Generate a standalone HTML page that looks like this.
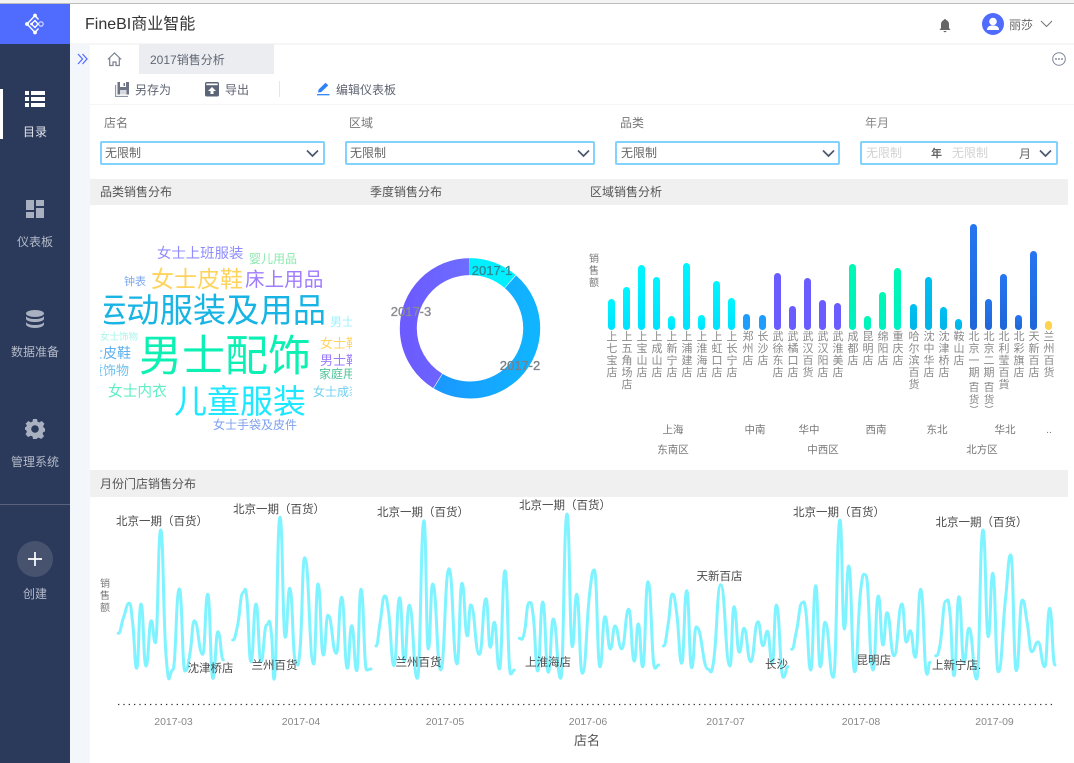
<!DOCTYPE html>
<html lang="zh"><head><meta charset="utf-8"><title>FineBI</title>
<style>
html,body{margin:0;padding:0;width:1074px;height:763px;overflow:hidden;background:#fff;font-family:"Liberation Sans","Noto Sans CJK SC",sans-serif}
body{position:relative;filter:blur(.35px)}
div,svg{position:absolute}
.t{position:absolute;white-space:nowrap;line-height:0;font-size:12px;color:#666}
.c{transform:translateX(-50%)}
.sb{color:#b4bac8;left:0;width:70px;text-align:center;font-size:12px}
.sel{border:2px solid #82d2ff;border-radius:2px;box-sizing:border-box;top:141px;height:24px;background:#fff}
.band{background:#f0f0f0;left:90px;width:978px}
.b{width:7px;border-radius:4px;bottom:433px}
.v{width:16px;top:332px;text-align:center;font-size:11px;line-height:11.95px;color:#888}
.r{font-size:10.5px;color:#777}
.w{position:absolute;white-space:nowrap;line-height:0}
.m{font-size:10.5px;color:#888}
.l{font-size:11.5px;color:#4a4a4a}
</style></head><body>
<div style="left:0;top:0;width:1074px;height:3px;background:#f4f4f4"></div>
<div style="left:0;top:3px;width:1074px;height:1px;background:#bdbdbd"></div>
<div style="left:0;top:44px;width:70px;height:719px;background:#2b3a5b"></div>
<div style="left:0;top:4px;width:70px;height:40px;background:#4f6cff"></div>
<div style="left:70px;top:44px;width:20px;height:719px;background:#f3f7fb"></div>
<div style="left:70px;top:43px;width:1004px;height:2px;background:#f6f6f6"></div>
<svg style="left:24px;top:12px" width="22" height="24" viewBox="0 0 22 24" fill="none" stroke="#fff"><path d="M3 12 11 3.500l3.500 4M3 12l8 8.500 3.500-4M7.500 12 11 8.500l3 3.500-3 3.500z" stroke-width="1.400"/><g fill="#fff" stroke="none"><circle cx="11" cy="3.500" r="1.900"/><circle cx="3" cy="12" r="1.900"/><circle cx="11" cy="20.500" r="1.900"/><circle cx="7.500" cy="12" r="1.300"/></g><circle cx="17" cy="12" r="2.200" stroke-width="1.100" opacity=".8"/></svg>
<div class="t" style="left:85px;top:24.500px;font-size:16px;color:#333">FineBI商业智能</div>
<svg style="left:938px;top:18px" width="14" height="15" viewBox="0 0 14 15"><path d="M7 1c.8 0 1 .5 1 1 2 .6 3 2.200 3 4.500V10l1.500 2h-11L3 10V6.500C3 4.200 4 2.600 6 2c0-.5.200-1 1-1zM5.500 13h3c0 .7-.6 1.200-1.500 1.200S5.500 13.700 5.500 13z" fill="#666"/></svg>
<svg style="left:982px;top:13px" width="22" height="22" viewBox="0 0 22 22"><circle cx="11" cy="11" r="11" fill="#4f6cff"/><circle cx="11" cy="8.500" r="3.800" fill="#fff"/><path d="M5 17c0-3.500 2.500-4.500 6-4.500s6 1 6 4.500z" fill="#fff"/></svg>
<div class="t" style="left:1009px;top:25px;color:#666">丽莎</div>
<svg style="left:1040px;top:20px" width="13" height="8" viewBox="0 0 13 8" fill="none"><path d="M1 1l5.500 5.500L12 1" stroke="#777" stroke-width="1.100"/></svg>
<svg style="left:77px;top:53px" width="11" height="12" viewBox="0 0 11 12" fill="none" stroke="#5a6cff" stroke-width="1.300"><path d="M1 1l4.500 5L1 11M5.500 1l4.500 5-4.500 5"/></svg>
<svg style="left:107px;top:52px" width="15" height="15" viewBox="0 0 15 15" fill="none" stroke="#7b8191" stroke-width="1.200"><path d="M.8 7.500 7.500 1l6.700 6.500M2.700 6v7.500h3.300v-3.500h3v3.500h3.300V6"/></svg>
<div style="left:139px;top:44px;width:135px;height:30px;background:#ecedf0"></div>
<div class="t" style="left:150px;top:60px;color:#5f6675">2017销售分析</div>
<svg style="left:1052px;top:52px" width="14" height="14" viewBox="0 0 14 14"><circle cx="7" cy="7" r="6.300" fill="none" stroke="#7d8599" stroke-width="1"/><g fill="#6a7287"><circle cx="4" cy="7" r=".9"/><circle cx="7" cy="7" r=".9"/><circle cx="10" cy="7" r=".9"/></g></svg>
<svg style="left:115px;top:82px" width="15" height="15" viewBox="0 0 15 15"><path d="M2.500 0H14v12.500H2.500z" fill="#6d7384"/><path d="M5 0h6v5H5z" fill="#fff"/><path d="M8.500 1h1.500v3H8.500z" fill="#6d7384"/><path d="M5 8h6.500v4.500H5z" fill="#d5d8de"/><path d="M.6 3v11.400H13" fill="none" stroke="#8d93a1" stroke-width="1.100"/></svg>
<div class="t" style="left:135px;top:90px;color:#5d6372">另存为</div>
<svg style="left:205px;top:82px" width="14" height="15" viewBox="0 0 14 15"><path d="M0 1.500C0 .7.700 0 1.500 0h11c.8 0 1.500.7 1.500 1.500V13c0 .8-.7 1.500-1.500 1.500h-11C.7 14.500 0 13.800 0 13z" fill="#5c6478"/><path d="M1.300 1.500h11.400v1.700H1.300z" fill="#fff"/><path d="M7 5l4 4H8.500v3h-3V9H3z" fill="#fff"/></svg>
<div class="t" style="left:225px;top:90px;color:#5d6372">导出</div>
<div style="left:279px;top:81px;width:1px;height:16px;background:#e6e6e6"></div>
<svg style="left:317px;top:82px" width="13" height="14" viewBox="0 0 13 14"><path d="M1 10.500l.6-3L8.500.8l2.800 2.600L4.300 10z" fill="#2d83f5"/><path d="M0 12.700h12.500" stroke="#2d83f5" stroke-width="1.300"/></svg>
<div class="t" style="left:336px;top:90px;color:#5d6372">编辑仪表板</div>
<div style="left:90px;top:104px;width:984px;height:1px;background:#f5f5f5"></div>
<div class="t" style="left:104px;top:122.500px;color:#777">店名</div>
<div class="t" style="left:349px;top:122.500px;color:#777">区域</div>
<div class="t" style="left:620px;top:122.500px;color:#777">品类</div>
<div class="t" style="left:865px;top:122.500px;color:#888">年月</div>
<div class="sel" style="left:100px;width:225px"></div><div class="t" style="left:105px;top:153px;color:#666">无限制</div>
<div class="sel" style="left:345px;width:250px"></div><div class="t" style="left:350px;top:153px;color:#666">无限制</div>
<div class="sel" style="left:615px;width:225px"></div><div class="t" style="left:621px;top:153px;color:#666">无限制</div>
<div class="sel" style="left:860px;width:198px"></div>
<div class="t" style="left:866px;top:153px;color:#d2d2d2">无限制</div><div class="t" style="left:931px;top:153.500px;color:#666;font-weight:bold;font-size:11px">年</div>
<div class="t" style="left:952px;top:153px;color:#d2d2d2">无限制</div><div class="t" style="left:1019px;top:153.500px;color:#666;font-size:12px">月</div>
<svg style="left:0;top:0" width="1074" height="170" fill="none" stroke="#4c5870" stroke-width="1.700"><path d="M307 150.500l5.500 5.500 5.500-5.500M578 150.500l5.500 5.500 5.500-5.500M823 150.500l5.500 5.500 5.500-5.500M1040 150.500l5.500 5.500 5.500-5.500"/></svg>
<div class="band" style="top:179px;height:26px"></div>
<div class="t" style="left:100px;top:192px;color:#555">品类销售分布</div>
<div class="t" style="left:370px;top:192px;color:#555">季度销售分布</div>
<div class="t" style="left:590px;top:192px;color:#555">区域销售分析</div>
<div class="band" style="top:470px;height:27px"></div>
<div class="t" style="left:100px;top:484px;color:#555">月份门店销售分布</div>

<div style="left:0;top:89px;width:3px;height:50px;background:#fff"></div>
<svg style="left:25px;top:91px" width="20" height="16" viewBox="0 0 20 16" fill="#fff"><path d="M0 0h4v4H0zM6 0h14v4H6zM0 6h4v4H0zM6 6h14v4H6zM0 12h4v4H0zM6 12h14v4H6z"/></svg>
<div class="t sb" style="top:132px;color:#e6e8ee">目录</div>
<svg style="left:26px;top:200px" width="18" height="18" viewBox="0 0 18 18" fill="#a9b0c0"><path d="M0 0h8v10H0zM10 0h8v6h-8zM0 12h8v6H0zM10 8h8v10h-8z"/></svg>
<div class="t sb" style="top:242px">仪表板</div>
<svg style="left:26px;top:310px" width="18" height="18" viewBox="0 0 18 18" fill="#a9b0c0"><ellipse cx="9" cy="3.500" rx="9" ry="3.500"/><path d="M0 6c1 2 4.500 3 9 3s8-1 9-3v3c-1 2-4.500 3-9 3S1 11 0 9zM0 12c1 2 4.500 3 9 3s8-1 9-3v2.500c-.5 2-4.500 3.500-9 3.500s-8.500-1.500-9-3.500z"/></svg>
<div class="t sb" style="top:352px">数据准备</div>
<svg style="left:25px;top:419px" width="20" height="20" viewBox="0 0 20 20"><path d="M8 0h4l.5 2.600 1.900.8L16.700 2l2.800 2.800-1.400 2.300.8 1.900L21 9.500v3l-2.600.4-.8 1.900 1.400 2.400-2.800 2.800-2.400-1.400-1.900.7L12 20H8l-.5-2.600-1.900-.7-2.400 1.400L.5 15.300l1.400-2.400-.8-1.900L-1 10.500v-2l2.100-.5.800-1.900L.5 4.800 3.300 2l2.300 1.400 1.900-.8z" fill="#a9b0c0"/><circle cx="10" cy="10" r="3.800" fill="#2b3a5b"/></svg>
<div class="t sb" style="top:462px">管理系统</div>
<div style="left:0;top:504px;width:70px;height:1px;background:#59637b"></div>
<div style="left:17px;top:541px;width:36px;height:36px;border-radius:50%;background:#47526e"></div>
<svg style="left:28px;top:552px" width="14" height="14" viewBox="0 0 14 14"><path d="M7 0v14M0 7h14" stroke="#fff" stroke-width="1.700"/></svg>
<div class="t sb" style="top:594px">创建</div>

<!-- word cloud -->
<div style="left:100px;top:230px;width:252px;height:210px;overflow:hidden;font-family:'Liberation Sans','Noto Sans CJK SC',sans-serif">
<div class="w" style="left:57px;top:24px;font-size:14.400px;color:#8f8cff">女士上班服装</div>
<div class="w" style="left:149px;top:29px;font-size:12px;color:#8ee8b0">婴儿用品</div>
<div class="w" style="left:24px;top:52px;font-size:11px;color:#7aa8ee">钟表</div>
<div class="w" style="left:51px;top:49px;font-size:23px;color:#ffd45e">女士皮鞋</div>
<div class="w" style="left:145px;top:50px;font-size:19.600px;color:#a07cff">床上用品</div>
<div class="w" style="left:-7px;top:82px;font-size:33.300px;color:#18b4e4;clip-path:inset(-30px 0 -30px 11px)">运动服装及用品</div>
<div class="w" style="left:230px;top:92px;font-size:12px;color:#9ff0ff">男士</div>
<div class="w" style="left:0;top:108px;font-size:9.500px;color:#a8f5ea">女士饰物</div>
<div class="w" style="left:39px;top:127px;font-size:43px;color:#0cf0b4">男士配饰</div>
<div class="w" style="left:220px;top:114px;font-size:13px;color:#ffd45e">女士鞋</div>
<div class="w" style="left:-25px;top:123px;font-size:14px;color:#5fb0ee">男士皮鞋</div>
<div class="w" style="left:220px;top:131px;font-size:13px;color:#9b7cff">男士鞋</div>
<div class="w" style="left:219px;top:144px;font-size:12px;color:#4fc59a">家庭用品</div>
<div class="w" style="left:-23px;top:141px;font-size:13px;color:#6fc0f0">儿童饰物</div>
<div class="w" style="left:8px;top:162px;font-size:14.700px;color:#5fefc5">女士内衣</div>
<div class="w" style="left:74px;top:172px;font-size:33px;color:#1ee8ff">儿童服装</div>
<div class="w" style="left:213px;top:162px;font-size:12px;color:#6fd0f0">女士成装</div>
<div class="w" style="left:113px;top:195px;font-size:12px;color:#7fa0ee">女士手袋及皮件</div>
</div>

<!-- donut -->
<svg style="left:390px;top:248px" width="160" height="160" viewBox="0 0 160 160" fill="none">
<defs><linearGradient id="g2" x1="0" y1="0" x2="0" y2="1"><stop offset="0" stop-color="#1d8fff"/><stop offset="1" stop-color="#10b4ff"/></linearGradient><linearGradient id="g3" x1="0" y1="0" x2="0" y2="1"><stop offset="0" stop-color="#6c5bff"/><stop offset="1" stop-color="#6f80ff"/></linearGradient></defs>
<g transform="rotate(-90 80 80.300)" stroke-width="17">
<circle cx="80" cy="80.300" r="61.700" stroke="#00f0ff" stroke-dasharray="43.600 344.100"/>
<circle cx="80" cy="80.300" r="61.700" stroke="url(#g2)" stroke-dasharray="183 204.700" stroke-dashoffset="-44.200"/>
<circle cx="80" cy="80.300" r="61.700" stroke="url(#g3)" stroke-dasharray="159.300 228.400" stroke-dashoffset="-227.800"/>
</g></svg>
<div class="t c" style="left:492px;top:271px;font-size:13px;color:#2f8a98;-webkit-text-stroke:.35px #2f8a98">2017-1</div>
<div class="t c" style="left:520px;top:366px;font-size:13px;color:#7a8088;-webkit-text-stroke:.35px #7a8088">2017-2</div>
<div class="t c" style="left:411px;top:311.500px;font-size:13px;color:#8a8a92;-webkit-text-stroke:.35px #8a8a92">2017-3</div>

<!-- bars -->
<div class="t" style="left:589px;top:260px;font-size:10px;color:#777">销</div>
<div class="t" style="left:589px;top:272px;font-size:10px;color:#777">售</div>
<div class="t" style="left:589px;top:284px;font-size:10px;color:#777">额</div>
<div class="b" style="left:608px;height:31px;background:linear-gradient(#00f5ff,#00e2ff)"></div>
<div class="b" style="left:623px;height:43px;background:linear-gradient(#00f5ff,#00e2ff)"></div>
<div class="b" style="left:638px;height:65px;background:linear-gradient(#00f5ff,#00e2ff)"></div>
<div class="b" style="left:653px;height:53px;background:linear-gradient(#00f5ff,#00e2ff)"></div>
<div class="b" style="left:668px;height:14px;background:linear-gradient(#00f5ff,#00e2ff)"></div>
<div class="b" style="left:683px;height:67px;background:linear-gradient(#00f5ff,#00e2ff)"></div>
<div class="b" style="left:698px;height:15px;background:linear-gradient(#00f5ff,#00e2ff)"></div>
<div class="b" style="left:713px;height:49px;background:linear-gradient(#00f5ff,#00e2ff)"></div>
<div class="b" style="left:728px;height:32px;background:linear-gradient(#00f5ff,#00e2ff)"></div>
<div class="b" style="left:743px;height:16px;background:#1f9dff"></div>
<div class="b" style="left:759px;height:15px;background:#1f9dff"></div>
<div class="b" style="left:774px;height:57px;background:#6a5cff"></div>
<div class="b" style="left:789px;height:24px;background:#6a5cff"></div>
<div class="b" style="left:804px;height:52px;background:#6a5cff"></div>
<div class="b" style="left:819px;height:30px;background:#6a5cff"></div>
<div class="b" style="left:834px;height:27px;background:#6a5cff"></div>
<div class="b" style="left:849px;height:66px;background:linear-gradient(#00f8b4,#00f0c0)"></div>
<div class="b" style="left:864px;height:14px;background:linear-gradient(#00f8b4,#00f0c0)"></div>
<div class="b" style="left:879px;height:38px;background:linear-gradient(#00f8b4,#00f0c0)"></div>
<div class="b" style="left:894px;height:62px;background:linear-gradient(#00f8b4,#00f0c0)"></div>
<div class="b" style="left:910px;height:26px;background:linear-gradient(#00c0f2,#00b4e8)"></div>
<div class="b" style="left:925px;height:53px;background:linear-gradient(#00c0f2,#00b4e8)"></div>
<div class="b" style="left:940px;height:23px;background:linear-gradient(#00c0f2,#00b4e8)"></div>
<div class="b" style="left:955px;height:11px;background:linear-gradient(#00c0f2,#00b4e8)"></div>
<div class="b" style="left:970px;height:106px;background:linear-gradient(#2676f0,#1f66d8)"></div>
<div class="b" style="left:985px;height:31px;background:linear-gradient(#2676f0,#1f66d8)"></div>
<div class="b" style="left:1000px;height:56px;background:linear-gradient(#2676f0,#1f66d8)"></div>
<div class="b" style="left:1015px;height:15px;background:linear-gradient(#2676f0,#1f66d8)"></div>
<div class="b" style="left:1030px;height:79px;background:linear-gradient(#2676f0,#1f66d8)"></div>
<div class="b" style="left:1045px;height:9px;background:#ffd24d"></div>

<div class="v" style="left:604px">上<br>七<br>宝<br>店</div>
<div class="v" style="left:619px">上<br>五<br>角<br>场<br>店</div>
<div class="v" style="left:634px">上<br>宝<br>山<br>店</div>
<div class="v" style="left:649px">上<br>成<br>山<br>店</div>
<div class="v" style="left:664px">上<br>新<br>宁<br>店</div>
<div class="v" style="left:679px">上<br>浦<br>建<br>店</div>
<div class="v" style="left:694px">上<br>淮<br>海<br>店</div>
<div class="v" style="left:709px">上<br>虹<br>口<br>店</div>
<div class="v" style="left:724px">上<br>长<br>宁<br>店</div>
<div class="v" style="left:740px">郑<br>州<br>店</div>
<div class="v" style="left:755px">长<br>沙<br>店</div>
<div class="v" style="left:770px">武<br>徐<br>东<br>店</div>
<div class="v" style="left:785px">武<br>橘<br>口<br>店</div>
<div class="v" style="left:800px">武<br>汉<br>百<br>货</div>
<div class="v" style="left:815px">武<br>汉<br>阳<br>店</div>
<div class="v" style="left:830px">武<br>淮<br>美<br>店</div>
<div class="v" style="left:845px">成<br>都<br>店</div>
<div class="v" style="left:860px">昆<br>明<br>店</div>
<div class="v" style="left:875px">绵<br>阳<br>店</div>
<div class="v" style="left:890px">重<br>庆<br>店</div>
<div class="v" style="left:906px">哈<br>尔<br>滨<br>百<br>货</div>
<div class="v" style="left:921px">沈<br>中<br>华<br>店</div>
<div class="v" style="left:936px">沈<br>津<br>桥<br>店</div>
<div class="v" style="left:951px">鞍<br>山<br>店</div>
<div class="v" style="left:966px">北<br>京<br>一<br>期</div>
<div class="v" style="left:966px;top:382px;font-size:10.500px;line-height:12px">百<br>货</div>
<div class="v" style="left:981px">北<br>京<br>二<br>期</div>
<div class="v" style="left:981px;top:382px;font-size:10.500px;line-height:12px">百<br>货</div>
<svg style="left:960px;top:376px" width="40" height="36" fill="none" stroke="#888" stroke-width=".8"><path d="M10 8q4-3 8 0M25 8q4-3 8 0M10 30q4 3 8 0M25 30q4 3 8 0"/></svg>
<div class="v" style="left:996px">北<br>利<br>莹<br>百<br>貨</div>
<div class="v" style="left:1011px">北<br>彩<br>旗<br>店</div>
<div class="v" style="left:1026px">天<br>新<br>百<br>店</div>
<div class="v" style="left:1041px">兰<br>州<br>百<br>货</div>

<div class="t c r" style="left:673px;top:430px">上海</div>
<div class="t c r" style="left:755px;top:429.500px">中南</div>
<div class="t c r" style="left:809px;top:429.500px">华中</div>
<div class="t c r" style="left:876px;top:429.500px">西南</div>
<div class="t c r" style="left:937px;top:429.500px">东北</div>
<div class="t c r" style="left:1005px;top:429.500px">华北</div>
<div class="t c r" style="left:1049px;top:430px">..</div>
<div class="t c r" style="left:673px;top:449.500px">东南区</div>
<div class="t c r" style="left:823px;top:449.500px">中西区</div>
<div class="t c r" style="left:982px;top:449.500px">北方区</div>

<!-- line chart -->
<svg id="lc" style="left:0;top:0" width="1074" height="763" fill="none" stroke="#7ff3ff" stroke-width="3" stroke-linecap="round" stroke-linejoin="round"></svg>
<svg style="left:0;top:700px" width="1074" height="8"><path d="M118 4.500H1056" stroke="#333" stroke-width="1.300" stroke-dasharray="1.300 4.030"/></svg>
<div class="t" style="left:100px;top:585px;font-size:10px;color:#777">销</div>
<div class="t" style="left:100px;top:597px;font-size:10px;color:#777">售</div>
<div class="t" style="left:100px;top:609px;font-size:10px;color:#777">额</div>
<div class="t l" style="left:116px;top:521.500px">北京一期（百货）</div>
<div class="t l" style="left:233px;top:509.500px">北京一期（百货）</div>
<div class="t l" style="left:377px;top:512.500px">北京一期（百货）</div>
<div class="t l" style="left:519px;top:505.500px">北京一期（百货）</div>
<div class="t l" style="left:793px;top:512.500px">北京一期（百货）</div>
<div class="t l" style="left:935.500px;top:522.500px">北京一期（百货）</div>
<div class="t l" style="left:187.500px;top:669px;clip-path:inset(-10px 1px -10px 0)">沈津桥店</div>
<div class="t l" style="left:251.500px;top:666px">兰州百货</div>
<div class="t l" style="left:395.500px;top:663px">兰州百货</div>
<div class="t l" style="left:525px;top:663px">上淮海店</div>
<div class="t l" style="left:696.500px;top:577px">天新百店</div>
<div class="t l" style="left:765px;top:665px">长沙</div>
<div class="t l" style="left:856.500px;top:661px">昆明店</div>
<div class="t l" style="left:932px;top:666px">上新宁店.</div>
<div class="t c m" style="left:173.500px;top:721.500px">2017-03</div>
<div class="t c m" style="left:301px;top:721.500px">2017-04</div>
<div class="t c m" style="left:445px;top:721.500px">2017-05</div>
<div class="t c m" style="left:588px;top:721.500px">2017-06</div>
<div class="t c m" style="left:725.500px;top:721.500px">2017-07</div>
<div class="t c m" style="left:861px;top:721.500px">2017-08</div>
<div class="t c m" style="left:994.500px;top:721.500px">2017-09</div>
<div class="t c" style="left:587px;top:740.500px;font-size:13px;color:#555">店名</div>
<script>
var S=[
[90,[85,430,100,385,118,340,128,400,140,535,153,342,168,528,184,392,196,458,212,120,228,495,248,540,268,297,285,543,300,490,313,392,338,493,353,313,369,565,384,425,400,510]],
[90,[428,450,442,410,460,307,470,320,483,515,498,342,513,515,530,405,545,440,552,568,570,82,586,442,599,295,617,515,630,480,644,203,671,522,684,282,700,495,714,376,739,490,755,322,772,535,785,407,800,542,813,298,830,540,843,537]],
[420,[-132,468,-120,400,-106,318,-95,360,-78,527,-61,323,-47,515,-32,346,-8,565,12,92,25,477,38,282,62,540,87,236,111,522,126,280,142,438,152,345,178,493,198,326,211,472,223,397,238,537,255,242,272,552,283,540]],
[420,[298,445,312,432,327,338,340,380,353,543,368,336,385,547,400,387,422,565,441,72,457,470,470,313,487,550,510,300,523,240,540,530,555,380,571,477,585,408,605,476,626,358,643,513,655,402,668,530,684,275,705,535,716,525]],
[420,[730,468,745,400,757,312,770,370,785,520,800,302,815,533,829,411,865,538,880,520,902,284,930,528,942,350,958,487,972,415,992,515,1014,395,1029,467,1042,424,1057,520,1069,345,1090,562,1104,530]],
[744,[143,478,157,425,175,338,185,360,200,540,215,287,229,530,243,397,268,562,288,90,301,417,314,228,332,545,350,300,365,255,387,540,403,318,417,465,429,368,450,497,474,342,487,456,499,422,514,502,530,298,549,553,558,517]],
[744,[575,497,587,470,606,333,618,370,630,557,645,320,660,517,675,415,698,567,717,120,733,440,746,250,763,545,785,320,800,195,817,542,835,330,850,400,863,485,882,456,902,530,917,355,933,525]]
];
var d='';
S.forEach(function(s){
 var o=s[0],a=s[1],P=[];
 for(var i=0;i<a.length;i+=2)P.push([o+a[i]/3,490+a[i+1]/3]);
 var n=P.length,m=[];
 for(var i=0;i<n;i++){
  if(i==0||i==n-1){m.push(0);continue;}
  var s0=(P[i][1]-P[i-1][1])/(P[i][0]-P[i-1][0]),s1=(P[i+1][1]-P[i][1])/(P[i+1][0]-P[i][0]);
  m.push(s0*s1<=0?0:(s0+s1)/2);
 }
 d+='M'+P[0][0].toFixed(1)+' '+P[0][1].toFixed(1);
 for(var i=0;i<n-1;i++){
  var h=(P[i+1][0]-P[i][0])/2;
  d+='C'+(P[i][0]+h).toFixed(1)+' '+(P[i][1]+m[i]*h).toFixed(1)+' '+(P[i+1][0]-h).toFixed(1)+' '+(P[i+1][1]-m[i+1]*h).toFixed(1)+' '+P[i+1][0].toFixed(1)+' '+P[i+1][1].toFixed(1);
 }
});
var p=document.createElementNS('http://www.w3.org/2000/svg','path');
p.setAttribute('d',d);
document.getElementById('lc').appendChild(p);
</script>
</body></html>
